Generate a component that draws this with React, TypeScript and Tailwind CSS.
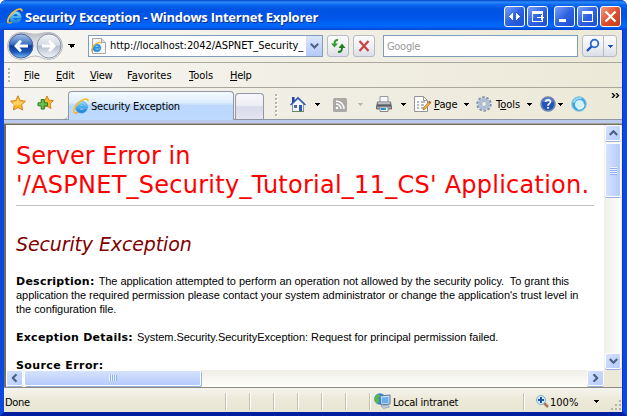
import type { ReactNode } from "react";

const UI = "font-['DejaVu_Sans_Condensed','DejaVu_Sans',sans-serif] [font-stretch:condensed] text-[11px] text-black whitespace-nowrap";

const E_SHAPE = "M14.500 10.300H6.200c.3 1.200 1.200 1.700 2.400 1.700 1 0 1.700-.3 2.200-.9h3.400C13.300 13.500 11.300 15 8.500 15 5 15 2.500 12.700 2.500 9.300S5 3.500 8.600 3.500 14.700 5.900 14.500 10.300zM6.300 7.900h4.400C10.500 6.900 9.700 6.300 8.600 6.300S6.600 6.900 6.300 7.900z";

function IELogo({ className = "" }: { className?: string }) {
  return (
    <svg viewBox="0 0 16 16" className={"h-4 w-4 shrink-0 " + className}>
      <defs>
        <linearGradient id="ieBlue" x1="0" y1="0" x2="0" y2="1">
          <stop offset="0" stopColor="#9be1fd" />
          <stop offset=".5" stopColor="#45b0f2" />
          <stop offset="1" stopColor="#1c7bd6" />
        </linearGradient>
      </defs>
      <path d={E_SHAPE} fill="url(#ieBlue)" stroke="#2a86d8" strokeWidth=".5" />
      <path d="M1.600 14.800C-1 12.500 3.500 5 9.500 2c3-1.500 5.800-1.400 5.400 1.300" fill="none" stroke="#f9bf2a" strokeWidth="1.700" />
      <path d="M1.600 14.800c1 .5 2.400 0 3.400-.8" fill="none" stroke="#e9a816" strokeWidth="1.200" />
    </svg>
  );
}

function Caret({ className = "", color = "#000" }: { className?: string; color?: string }) {
  return (
    <svg viewBox="0 0 5 3" shapeRendering="crispEdges" className={"h-[3px] w-[5px] shrink-0 " + className}>
      <path d="M0 0h5v1h-1v1h-1v1h-1v-1h-1v-1h-1z" fill={color} />
    </svg>
  );
}

function CapButton({ children, className = "" }: { children: ReactNode; className?: string }) {
  return (
    <div className={"h-[21px] w-[21px] shrink-0 rounded-[3px] border border-white bg-linear-to-br from-[#7c9ef5] via-[#2d62e2] to-[#1d50cf] " + className}>
      <svg viewBox="0 0 19 19" className="h-[19px] w-[19px]" shapeRendering="crispEdges">{children}</svg>
    </div>
  );
}

function TitleBar() {
  return (
    <div className="flex h-[30px] shrink-0 items-start rounded-t-[6px] bg-[linear-gradient(180deg,#0043c8_0px,#2b8af8_2px,#0b66ee_5px,#0054e3_9px,#0055e8_18px,#0068fc_25px,#005cf0_28px,#003fc4_30px)] pl-[7px]">
      <IELogo className="mt-2" />
      <span className="mt-[7px] ml-[2px] w-[480px] whitespace-nowrap font-['Open_Sans','Noto_Sans',sans-serif] text-[13px] leading-[20px] font-bold text-white tracking-[-0.26px] [text-shadow:1px_1px_0_#0a2f94]">
        Security Exception - Windows Internet Explorer
      </span>
      <CapButton className="mt-[6px] -ml-px">
        <path d="M4 9h1v-1h1v-1h1v-1h1v7h-1v-1h-1v-1h-1v-1h-1zM15 9h-1v-1h-1v-1h-1v-1h-1v7h1v-1h1v-1h1v-1h1z" fill="#fff" />
      </CapButton>
      <CapButton className="mt-[6px] ml-[2px]">
        <path d="M4 4h11v3h-11zM4 7h1v8h-1zM4 14h11v1h-11zM14 7h1v2h-1zM14 12h1v2h-1zM9 10h7v1h-7zM13 8h1v5h-1zM14 9h1v3h-1z" fill="#fff" />
      </CapButton>
      <CapButton className="mt-[6px] ml-[6px]">
        <path d="M4 12h7v3h-7z" fill="#fff" />
      </CapButton>
      <CapButton className="mt-[6px] ml-[2px]">
        <path d="M4 4h11v11h-11zM5 7v7h9v-7z" fill="#fff" fillRule="evenodd" />
      </CapButton>
      <div className="mt-[6px] ml-[2px] h-[21px] w-[21px] shrink-0 rounded-[3px] border border-white bg-linear-to-br from-[#f09a80] via-[#e1502c] to-[#c63c14]">
        <svg viewBox="0 0 19 19" className="h-[19px] w-[19px]">
          <path d="M4.500 4.500l10 10M14.500 4.500l-10 10" stroke="#fff" strokeWidth="2.300" />
        </svg>
      </div>
    </div>
  );
}

function NavButtons() {
  return (
    <svg viewBox="0 0 60 30" className="h-[30px] w-[60px] shrink-0">
      <defs>
        <linearGradient id="pill" x1="0" y1="0" x2="0" y2="1">
          <stop offset="0" stopColor="#b9bcc4" />
          <stop offset=".5" stopColor="#e8e9ee" />
          <stop offset="1" stopColor="#fafafa" />
        </linearGradient>
        <linearGradient id="back" x1="0" y1="0" x2="0" y2="1">
          <stop offset="0" stopColor="#a9c2e8" />
          <stop offset=".42" stopColor="#3b72c4" />
          <stop offset=".5" stopColor="#0b3c9c" />
          <stop offset=".75" stopColor="#1a57bd" />
          <stop offset="1" stopColor="#7ac5fb" />
        </linearGradient>
        <linearGradient id="fwd" x1="0" y1="0" x2="0" y2="1">
          <stop offset="0" stopColor="#f4f6f9" />
          <stop offset=".45" stopColor="#d5dae4" />
          <stop offset=".52" stopColor="#b5bfcf" />
          <stop offset="1" stopColor="#f2f6fb" />
        </linearGradient>
      </defs>
      <path d="M17 1.500C23 1.500 26 3.200 31 3.200S39 1.500 45 1.500A13.500 13.500 0 0 1 45 28.500C39 28.500 37 25 31 25S23 28.500 17 28.500A13.500 13.500 0 0 1 17 1.500Z" fill="url(#pill)" stroke="#b8bac0" />
      <circle cx="17" cy="15" r="12" fill="url(#back)" stroke="#4d6798" />
      <circle cx="45" cy="15" r="12" fill="url(#fwd)" stroke="#8b93a3" />
      <path d="M24 15h-10M17 9.800l-5 5.200 5 5.200" fill="none" stroke="#fff" strokeWidth="2.800" />
      <path d="M38 15h10M45 9.800l5 5.200-5 5.200" fill="none" stroke="#fff" strokeWidth="2.800" />
    </svg>
  );
}

const toolBtn = "h-[22px] shrink-0 rounded-[3px] border border-[#b5bac6] bg-linear-to-b from-[#fbfbfc] via-[#f0f1f4] to-[#dcdfe8]";

function AddressBar() {
  return (
    <div className="flex h-[32px] shrink-0 items-center bg-linear-to-r from-[#f6f5f1] to-[#ece9d8]">
      <NavButtons />
      <Caret className="ml-1 h-[4px] w-[7px]" />
      <div className="ml-[13px] flex h-[22px] w-[235px] shrink-0 items-center border border-[#7f9db9] bg-white">
        <svg viewBox="0 0 16 16" className="ml-[2px] h-4 w-4 shrink-0">
          <path d="M1.500 .5h9l4 4v11h-13z" fill="#f8f8f8" stroke="#a5a5a5" />
          <path d="M10.500.5v4h4" fill="#ddd" stroke="#a5a5a5" />
          <svg x="0" y="3.500" width="11" height="11" viewBox="0 0 16 16">
            <path d={E_SHAPE} fill="#2b93e2" stroke="#147dd2" strokeWidth=".6" />
            <path d="M1.800 14.800C-1 12.500 3.500 5 9.500 2c3-1.500 5.600-1.400 5.200 1.300" fill="none" stroke="#eeb52c" strokeWidth="1.800" />
          </svg>
        </svg>
        <span className={UI + " mt-px ml-[3px] w-[196px] overflow-hidden tracking-[-0.07px]"}>http://localhost:2042/ASPNET_Security_</span>
        <div className="flex h-[20px] w-[16px] shrink-0 items-center justify-center bg-linear-to-b from-[#dbe6fe] to-[#b3c9f8]">
          <svg viewBox="0 0 9 6" className="h-[6px] w-[9px]"><path d="M.8.8l3.700 3.700L8.200.8" fill="none" stroke="#4d6185" strokeWidth="2" /></svg>
        </div>
      </div>
      <div className={toolBtn + " ml-[4px] w-[22px]"}>
        <svg viewBox="0 0 20 20" className="h-5 w-5">
          <path d="M10 4.200C8 3.800 6.500 5 6.500 8" fill="none" stroke="#2f9a26" strokeWidth="2" />
          <path d="M3 7.500h7l-3.500 4z" fill="#379c2c" />
          <path d="M10 15.800c2.500.4 4-.8 4-4" fill="none" stroke="#1b8117" strokeWidth="2" />
          <path d="M10.500 12h7L14 7.500z" fill="#247f1d" />
        </svg>
      </div>
      <div className={toolBtn + " ml-[4px] w-[22px]"}>
        <svg viewBox="0 0 20 20" className="h-5 w-5">
          <path d="M5.500 5l9 10M14.500 5l-9 10" stroke="#c94444" strokeWidth="2.300" />
        </svg>
      </div>
      <div className="ml-[8px] flex h-[22px] w-[195px] shrink-0 items-center border border-[#7f9db9] bg-white pl-[3px]">
        <span className={UI + " mt-[2px] text-[#9a9a9a]! tracking-[-0.3px]"}>Google</span>
      </div>
      <div className={toolBtn + " ml-[4px] flex w-[35px] items-center"}>
        <svg viewBox="0 0 20 20" className="h-5 w-5 shrink-0">
          <circle cx="11.500" cy="7.500" r="3.800" fill="#f2f8ff" stroke="#2d66d0" strokeWidth="1.800" />
          <path d="M8.500 10.500l-4.500 4.500" stroke="#1c50bd" strokeWidth="2.400" />
        </svg>
        <div className="flex h-5 w-[13px] items-center justify-center border-l border-[#b5bac6]"><Caret color="#1c50bd" /></div>
      </div>
    </div>
  );
}

function Gripper({ n }: { n: number }) {
  return (
    <div className="flex w-[3px] shrink-0 flex-col gap-[2px]">
      {Array.from({ length: n }, (_, i) => (
        <div key={i} className="h-[2px] w-[2px] bg-[#b5b3a8] shadow-[1px_1px_0_#fff]" />
      ))}
    </div>
  );
}

function MenuBar() {
  return (
    <div className="flex h-[26px] shrink-0 items-center border-y border-t-[#aaa89c] border-b-[#aaa89c] bg-linear-to-r from-[#f6f5f1] to-[#ece9d8] pl-1">
      <Gripper n={4} />
      <div className="mt-[2px] ml-[13px] flex">
        <span className={UI + " w-[32px] tracking-[-0.2px]"}><u>F</u>ile</span>
        <span className={UI + " w-[34px] tracking-[-0.2px]"}><u>E</u>dit</span>
        <span className={UI + " w-[37px] tracking-[-0.3px]"}><u>V</u>iew</span>
        <span className={UI + " w-[62px]"}>F<u>a</u>vorites</span>
        <span className={UI + " w-[41px]"}><u>T</u>ools</span>
        <span className={UI + " tracking-[-0.3px]"}><u>H</u>elp</span>
      </div>
    </div>
  );
}

const STAR = "M8 .8l2.200 4.800 5.200.6-3.800 3.600 1 5.200L8 12.500 3.400 15l1-5.200L.6 6.200l5.200-.6z";

function Toolbar() {
  return (
    <div className="flex h-[37px] shrink-0 flex-col bg-linear-to-r from-[#f4f3ef] to-[#ece9d8]">
      <div className="flex h-[32px] shrink-0 items-start border-b border-[#8f95a3]">
        <div className="flex h-[32px] w-[64px] shrink-0 items-start rounded-br-[5px] border-b border-[#9298a6] pt-[7px] pl-[6px]">
          <svg viewBox="0 0 16 16" className="h-4 w-4">
            <path d={STAR} fill="#fcb72c" stroke="#d58018" />
            <path d="M8 2.500l1.500 4 4 .5-3 2.500L4 10.500 2.500 7l4-.500z" fill="#ffe082" opacity=".65" />
          </svg>
          <svg viewBox="0 0 17 16" className="ml-[11px] h-4 w-[17px]">
            <path d="M10 1l2 4.200 4.300.5-3.200 3.100.9 4.700-4-2.300L6 13l.9-4.200L4 5.700 8 5.200z" fill="#fcb72c" stroke="#d58018" />
            <path d="M4.200 4.500h3v3.300h3.300v3H7.200v3.300h-3v-3.300H1v-3h3.200z" fill="#69c350" stroke="#257d21" />
          </svg>
        </div>
        <div className="mt-[3px] flex h-[29px] w-[166px] shrink-0 items-center rounded-t-[4px] border border-b-0 border-[#9298a6] bg-[linear-gradient(180deg,#f5faff_0%,#deedfc_38%,#bbd8fc_48%,#bddbff_100%)] pl-[4px]">
          <IELogo />
          <span className={UI + " mt-[2px] ml-[2px] tracking-[-0.2px]"}>Security Exception</span>
        </div>
        <div className="mt-[5px] ml-px h-[26px] w-[29px] shrink-0 rounded-t-[4px] border border-b-0 border-[#9298a6] bg-[linear-gradient(180deg,#f6f6fa_0%,#eeeef6_45%,#d9daea_52%,#e5e6f1_100%)]" />
        <div className="mt-[6px] ml-[11px]"><Gripper n={6} /></div>
        <div className="flex h-8 items-center">
          <svg viewBox="0 0 16 16" className="ml-[12px] h-4 w-4 shrink-0">
            <path d="M2.500 8v7.500h11V8L8 2.500z" fill="#f1f4fa" stroke="#8796ae" />
            <path d="M0 8.500L8 .7l8 7.800-1 1-7-6.500-7 6.500z" fill="#3159b1" />
            <path d="M2 1h2.500v4L2 7z" fill="#263f9d" />
            <path d="M9 9h3v6H9z" fill="#315bad" /><path d="M4 9h3v3H4z" fill="#536b8e" />
            <path d="M2 15.500h12" stroke="#67855a" />
          </svg>
          <Caret className="ml-[9px]" />
          <svg viewBox="0 0 14 14" className="mt-px ml-[13px] h-[14px] w-[14px] shrink-0">
            <rect width="14" height="14" rx="1.500" fill="#aaa9a6" />
            <path d="M3 6a5 5 0 0 1 5 5M3 3a8 8 0 0 1 8 8" fill="none" stroke="#fff" strokeWidth="1.500" />
            <circle cx="4" cy="10" r="1.300" fill="#fff" />
          </svg>
          <Caret className="ml-[11px]" color="#bdbbb0" />
          <svg viewBox="0 0 16 16" className="ml-[13px] h-4 w-4 shrink-0">
            <path d="M4 .5h8v6H4z" fill="#f7f7f7" stroke="#999" />
            <path d="M1.500 6h13L15.500 11v2H.5v-2z" fill="#a0a4a8" stroke="#686c72" />
            <path d="M2 7h12" stroke="#d8d8d8" /><path d="M1 9.500h14" stroke="#555b63" strokeWidth="2" />
            <path d="M4 11h8v4.500H4z" fill="#fff" stroke="#888" />
            <path d="M5 12h3v2H5z" fill="#2287df" /><path d="M8 12h2v2H8z" fill="#28a6a1" />
          </svg>
          <Caret className="ml-[9px]" />
          <svg viewBox="0 0 17 16" className="ml-[8px] h-4 w-[17px] shrink-0">
            <path d="M.5.500h9l4 4v11H.5z" fill="#fdfdfd" stroke="#949494" />
            <path d="M9.500.5v4h4" fill="none" stroke="#999" />
            <path d="M3 6h2M7 6h4M3 9h2M7 9h3M3 12h2M7 12h3" stroke="#697d9c" />
            <path d="M9 14l1-3 5.500-6 1.500 1.500-5.500 6.500z" fill="#f5ae36" stroke="#9b6b25" strokeWidth=".6" />
            <path d="M15 5.500l1.500 1.500" stroke="#c64327" strokeWidth="1.500" />
          </svg>
          <span className={UI + " mt-[2px] ml-[3px] w-[24px] tracking-[-0.1px]"}><u>P</u>age</span>
          <Caret className="ml-[6px]" />
          <svg viewBox="0 0 16 16" className="ml-[7px] h-4 w-4 shrink-0">
            <circle cx="8" cy="8" r="6.700" fill="none" stroke="#7d91a8" strokeWidth="2" strokeDasharray="2.600 1.610" />
            <circle cx="8" cy="8" r="4.500" fill="none" stroke="#aabed4" strokeWidth="3.200" />
            <circle cx="8" cy="8" r="2.500" fill="#f0f0ec" stroke="#7d91a8" strokeWidth=".7" />
          </svg>
          <span className={UI + " mt-[2px] ml-[4px] w-[27px]"}>T<u>o</u>ols</span>
          <Caret className="ml-[4px]" />
          <svg viewBox="0 0 16 16" className="ml-[8px] h-4 w-4 shrink-0">
            <circle cx="8" cy="8" r="7" fill="#2556b7" stroke="#7286ad" strokeWidth="1.600" />
            <path d="M3 6a5 4 0 0 1 10 0z" fill="#7fa5e4" opacity=".6" />
            <path d="M5.700 6c.1-3 4.900-2.800 4.700 0C10.300 7.500 8 7.800 8 9.700" fill="none" stroke="#fff" strokeWidth="1.700" />
            <path d="M7.200 11h1.700v1.700H7.200z" fill="#fff" />
          </svg>
          <Caret className="ml-[2px]" />
          <svg viewBox="0 0 16 16" className="ml-[8px] h-4 w-4 shrink-0">
            <circle cx="8" cy="8" r="7.300" fill="#3fa6de" stroke="#8cc4de" strokeWidth="1" />
            <path d="M2.600 6.500a6 6 0 0 1 8-4" stroke="#9fdcf6" strokeWidth="1.800" fill="none" />
            <circle cx="8.500" cy="8.500" r="4.500" fill="#d3f1fd" />
            <path d="M13 8.500a4.500 4.500 0 0 1-6.500 4" stroke="#fff" strokeWidth="1.200" fill="none" />
          </svg>
        </div>
        <svg viewBox="0 0 9 5" className="mt-[5px] ml-[24px] h-[5px] w-[9px] shrink-0">
          <path d="M1 0l2.500 2.500L1 5M5 0l2.500 2.500L5 5" fill="none" stroke="#000" strokeWidth="1.400" />
        </svg>
      </div>
      <div className="h-[3px] bg-[#bccaec]" />
      <div className="h-[2px] border-t border-[#a5a399] bg-[#716f64]" />
    </div>
  );
}

const sbtn = "flex shrink-0 items-center justify-center rounded-[2px] border border-white bg-linear-to-br from-[#d5e2fe] to-[#b6cbfa] shadow-[0_1px_0_#94afe0]";

function Arrow({ turn = "" }: { turn?: string }) {
  return (
    <svg viewBox="0 0 9 6" className={"h-[6px] w-[9px] shrink-0 " + turn}>
      <path d="M.8 5l3.700-3.700L8.200 5" fill="none" stroke="#4d6185" strokeWidth="2.200" />
    </svg>
  );
}

const bold = "font-['DejaVu_Sans',Verdana,sans-serif] tracking-[0.25px]";

function Page() {
  return (
    <div className="flex h-[245px] shrink-0">
      <div className="h-[245px] w-[598px] shrink-0 bg-white pl-[10px] font-['Liberation_Sans',Arial,sans-serif] text-[11px] leading-[14px] tracking-[-0.055px] text-black">
        <h1 className="mt-[17px] w-[578px] whitespace-nowrap font-['DejaVu_Sans',Verdana,sans-serif] text-[24px] leading-[29px] text-[#ff0000]">
          <span className="block tracking-[0px]">Server Error in</span>
          <span className="block tracking-[0.25px]">'/ASPNET_Security_Tutorial_11_CS' Application.</span>
        </h1>
        <hr className="mt-[5px] w-[578px] border-[#c0c0c0]" />
        <h2 className="mt-[26px] font-['DejaVu_Sans',Verdana,sans-serif] text-[19px] leading-[24px] tracking-[-0.13px] text-[#800000] italic">Security Exception</h2>
        <p className="mt-[18px] h-[14px] whitespace-pre"><b className={bold}>Description: </b>The application attempted to perform an operation not allowed by the security policy.  To grant this</p>
        <p className="h-[14px] whitespace-nowrap">application the required permission please contact your system administrator or change the application's trust level in</p>
        <p className="h-[14px]">the configuration file.</p>
        <p className="mt-[14px] h-[14px] whitespace-pre"><b className={bold}>Exception Details: </b>System.Security.SecurityException: Request for principal permission failed.</p>
        <p className="mt-[14px] h-[14px]"><b className="font-['DejaVu_Sans',Verdana,sans-serif] tracking-[0.4px]">Source Error:</b></p>
      </div>
      <div className="flex w-[17px] shrink-0 flex-col bg-linear-to-r from-[#f0efe8] to-[#fefefb] pl-px">
        <div className={sbtn + " h-[16px]"}><Arrow /></div>
        <div className={sbtn + " mt-[2px] h-[54px] flex-col gap-px bg-linear-to-r!"}>
          {[0, 1, 2, 3].map((i) => <div key={i} className="h-px w-[7px] bg-[#eef4fe] shadow-[0_1px_0_#8cb0f8]" />)}
        </div>
        <div className={sbtn + " mt-auto mb-px h-[16px]"}><Arrow turn="rotate-180" /></div>
      </div>
    </div>
  );
}

function HorizontalScroll() {
  return (
    <div className="relative flex h-[17px] shrink-0 bg-[#ece9d8]">
      <div className="flex w-[598px] shrink-0 bg-linear-to-b from-[#f0efe8] to-[#fefefb]">
        <div className={sbtn + " h-[16px] w-[17px]"}><Arrow turn="-rotate-90" /></div>
        <div className={sbtn + " ml-px h-[16px] w-[177px] gap-px bg-linear-to-b! shadow-[1px_1px_0_#94afe0]!"}>
          {[0, 1, 2, 3].map((i) => <div key={i} className="h-[6px] w-px bg-[#eef4fe] shadow-[1px_0_0_#8cb0f8]" />)}
        </div>
        <div className={sbtn + " ml-auto h-[16px] w-[17px]"}><Arrow turn="rotate-90" /></div>
      </div>
    </div>
  );
}

function StatusBar() {
  return (
    <div className="flex h-[25px] shrink-0 items-center border-t border-[#8d8b82] bg-linear-to-b from-[#f5f4ed] via-[#ece9d8] to-[#e8e5d4] pt-[2px] pl-px">
      <span className={UI + " mt-[4px] w-[220px] tracking-[-0.3px]"}>Done</span>
      {[0, 1, 2, 3, 4, 5, 6].map((i) => (
        <div key={i} className="h-[17px] w-[24px] shrink-0 border-l border-[#c3c1b3] shadow-[inset_1px_0_0_#fff]" />
      ))}
      <svg viewBox="0 0 17 16" className="-ml-[19px] h-4 w-[17px] shrink-0">
        <circle cx="6" cy="6" r="5.800" fill="#3984d0" />
        <path d="M1 4c3-4 5-3 5-1L4 5l1 2-1 4C1 9-.5 7 1 4z" fill="#55bd42" />
        <path d="M6 3l10-1v9L7 12z" fill="#d7e2ef" stroke="#59769d" />
        <path d="M7.500 4.500L14.500 4v6l-6.500.5z" fill="#65aef0" />
        <path d="M7 13l7-1 1.500 2-6 1.500z" fill="#c4cdd9" stroke="#8391a7" strokeWidth=".6" />
      </svg>
      <span className={UI + " mt-[4px] ml-[2px] w-[130px] tracking-[-0.2px]"}>Local intranet</span>
      <div className="h-[17px] w-[13px] shrink-0 border-l border-[#c3c1b3] shadow-[inset_1px_0_0_#fff]" />
      <svg viewBox="0 0 13 13" className="h-[13px] w-[13px] shrink-0">
        <path d="M8 8l4 4" stroke="#a8735d" strokeWidth="2.500" />
        <circle cx="5" cy="5" r="4.500" fill="#d9efff" stroke="#7da9d3" />
        <path d="M5 2v6M2 5h6" stroke="#1853ad" strokeWidth="2" />
      </svg>
      <span className={UI + " mt-[4px] ml-px w-[44px]"}>100%</span>
      <Caret />
      <svg viewBox="0 0 12 12" className="mt-[8px] ml-[11px] h-3 w-3 shrink-0" shapeRendering="crispEdges">
        <path d="M9 1h2v2H9zM5 5h2v2H5zM9 5h2v2H9zM1 9h2v2H1zM5 9h2v2H5zM9 9h2v2H9z" fill="#b8b4a3" />
      </svg>
    </div>
  );
}

export default function App() {
  return (
    <div className="h-[416px] w-[627px] overflow-hidden bg-white">
      <div className="flex h-[416px] w-[627px] flex-col overflow-hidden rounded-t-[6px] bg-[#0831d9]">
        <TitleBar />
        <div className="flex h-[386px] flex-col border-x-4 border-b-4 border-x-[#0c49df] border-b-[#001ea0] pr-px">
          <AddressBar />
          <MenuBar />
          <Toolbar />
          <div className="flex shrink-0 flex-col border-l-2 border-[#716f64] bg-[#ece9d8]">
            <Page />
            <HorizontalScroll />
          </div>
          <StatusBar />
        </div>
      </div>
    </div>
  );
}
